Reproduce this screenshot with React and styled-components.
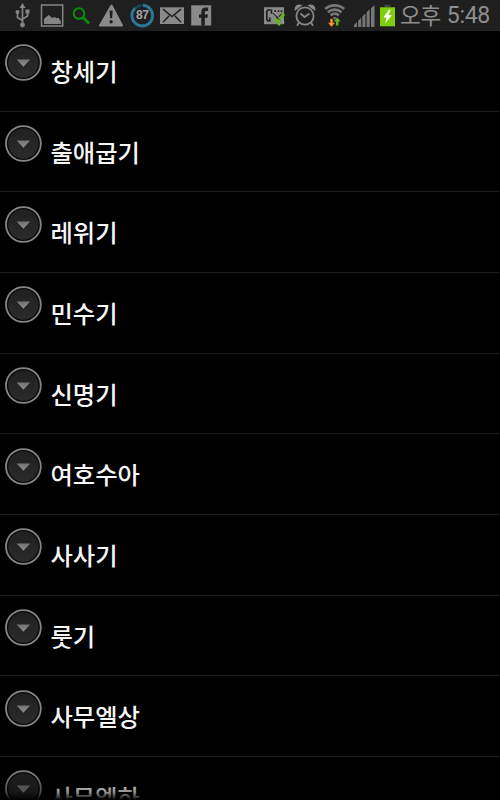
import React from 'react';
import styled, { createGlobalStyle } from 'styled-components';

const GlobalStyle = createGlobalStyle`
  html, body { margin: 0; background: #000; }
  *, *::before, *::after { box-sizing: border-box; }
`;

const Screen = styled.main`
  position: relative;
  display: flex;
  flex-direction: column;
  width: 500px;
  height: 800px;
  overflow: hidden;
  background: #000;
  font-family: Roboto, 'Noto Sans CJK KR', sans-serif;
`;

const StatusBar = styled.header`
  display: flex;
  flex: none;
  justify-content: space-between;
  height: 31px;
  padding: 0 10px 0 12px;
  background: #1f1f1f;
`;

const IconGroup = styled.div`
  display: flex;
  align-items: flex-start;
  gap: ${({ $gap }) => $gap}px;
`;

const StatusIcon = styled.svg`
  display: block;
  flex: none;
  width: ${({ $width }) => $width}px;
  height: 31px;
  overflow: visible;
`;

const Clock = styled.time`
  display: flex;
  justify-content: space-between;
  width: 90px;
  height: 30px;
  color: #8f8f8f;
  font-size: 23px;
  line-height: 31px;
  letter-spacing: -0.3px;
  white-space: nowrap;
`;

const Meridiem = styled.span`
  font-family: 'Noto Sans CJK KR', sans-serif;
  font-size: 22.5px;
  font-weight: 400;
  line-height: 28px;
`;

const BookList = styled.ul`
  flex: 1;
  min-height: 0;
  margin: 0;
  padding: 0;
  overflow: hidden;
  list-style: none;
`;

const BookRow = styled.li`
  display: flex;
  align-items: flex-start;
  height: 80.67px;
  padding-left: 5px;
  border-bottom: 1px solid #1c1c1c;
`;

const Expander = styled.svg`
  flex: none;
  width: 37px;
  height: 37px;
  margin-top: 13.4px;
`;

const BookName = styled.span`
  margin: 22px 0 0 8.5px;
  color: #f7f7f7;
  font-family: 'Noto Sans CJK KR', sans-serif;
  font-size: 24.3px;
  font-weight: 500;
  line-height: 36px;
`;

const BottomFade = styled.div`
  position: absolute;
  right: 0;
  bottom: 0;
  left: 0;
  height: 32px;
  background: linear-gradient(rgba(0, 0, 0, 0), rgba(0, 0, 0, 0.4) 75%, #000);
  pointer-events: none;
`;

const books = ['창세기', '출애굽기', '레위기', '민수기', '신명기', '여호수아', '사사기', '룻기', '사무엘상', '사무엘하'];

const Usb = () => (
  <StatusIcon $width={20} viewBox="0 0 20 31" fill="none" stroke="#858585" strokeWidth="1.7">
    <path d="M10.5 7v17M10.5 20.5l-5-3V13M10.5 19l5-3v-4" />
    <path d="M10.5 3l3 5h-6z" fill="#858585" stroke="none" />
    <circle cx="10.5" cy="25" r="2.4" fill="#858585" stroke="none" />
    <circle cx="5.5" cy="12" r="2" fill="#858585" stroke="none" />
    <path d="M13.5 9.5h4v4h-4z" fill="#858585" stroke="none" />
  </StatusIcon>
);

const Picture = () => (
  <StatusIcon $width={24} viewBox="0 0 24 31">
    <path d="M2.5 4.9h21.2v21.2H2.5z" fill="none" stroke="#858585" strokeWidth="1.5" />
    <path d="M5 24v-5l4.5-4 4 3 2-1 2 1.3 2-.6 2.3 3.3v3z" fill="#858585" />
  </StatusIcon>
);

const Search = () => (
  <StatusIcon $width={21} viewBox="0 0 21 31" fill="none" stroke="#078c0d">
    <circle cx="9" cy="13.5" r="5.3" strokeWidth="2" />
    <path d="M13 17.5l6 6" strokeWidth="2.8" />
  </StatusIcon>
);

const Warning = () => (
  <StatusIcon $width={25} viewBox="0 0 25 31">
    <path d="M13.5 5.5L24 25.5H2z" fill="#8b8b8b" stroke="#8b8b8b" strokeWidth="2" strokeLinejoin="round" />
    <path d="M11.5 10.5h3.2l-.6 7.8h-2z" fill="#1f1f1f" />
    <circle cx="13.1" cy="21.7" r="1.7" fill="#1f1f1f" />
  </StatusIcon>
);

const Level = styled.text`
  fill: #a4a4a4;
  font: 700 12px 'Liberation Sans', sans-serif;
  letter-spacing: -0.4px;
`;

const BatteryRing = () => (
  <StatusIcon $width={24} viewBox="0 0 24 31">
    <circle cx="12.3" cy="15.6" r="10.3" fill="none" stroke="#184353" strokeWidth="2.8" />
    <path d="M12.3 5.3A10.3 10.3 0 1 1 5 8.3" fill="none" stroke="#2a7695" strokeWidth="3" />
    <path d="M12.3 3v5" stroke="#1f1f1f" strokeWidth="1" />
    <Level x="12.2" y="19.4" textAnchor="middle">87</Level>
  </StatusIcon>
);

const Mail = () => (
  <StatusIcon $width={24} viewBox="0 0 24 31">
    <path d="M0 7.3h24V24H0z" fill="#8a8a8a" />
    <path d="M3 9.2l9 7.3 9-7.3M3 22.3l6.2-6.5M21 22.3l-6.2-6.5" fill="none" stroke="#1f1f1f" strokeWidth="1.5" />
  </StatusIcon>
);

const Facebook = () => (
  <StatusIcon $width={21} viewBox="0 0 21 31">
    <path d="M.2 5.3h20v20.2H.2z" fill="#8a8a8a" />
    <path d="M10.3 25.5v-7.7H8v-3.4h2.3V12c0-3 1.8-4.4 4.3-4.4h2.5v3.3h-1.8c-1 0-1.5.5-1.5 1.4v2.1h3.1l-.4 3.4h-2.7v7.7z" fill="#1f1f1f" />
  </StatusIcon>
);

const KeyImage = () => (
  <StatusIcon $width={22} viewBox="0 0 22 31">
    <path d="M0 7.2h20v17H0z" fill="#898989" />
    <path d="M6.5 10H4L2.8 11.3v8.2L4 20.8h1.8v-3.3M7.5 9.5v4.3M11.2 10.3v1.8M14.5 10.3v1.8M17.5 10.3v1.8" fill="none" stroke="#1f1f1f" strokeWidth="1.7" />
    <path d="M9.3 13.2l7 7.3M18.5 13.5l-6 5" fill="none" stroke="#1f1f1f" strokeWidth="1.2" />
    <path d="M8.5 11l12 12" stroke="#a0a0a0" />
    <path d="M19 14.5v3.7h-3M15 24v-3.5h-3" fill="none" stroke="#65b51e" strokeWidth="1.8" />
    <path d="M16.4 15.5l2.6-3 2.6 3zM12.4 23l2.6 3.3 2.6-3.3zM12.5 17.8l-2.9 2.7 2.9 2.7zM16.8 15.8l-2.5 2.4 2.5 2.4z" fill="#65b51e" />
  </StatusIcon>
);

const Alarm = () => (
  <StatusIcon $width={22} viewBox="0 0 22 31" fill="none" stroke="#888" strokeWidth="1.8">
    <circle cx="11" cy="16" r="8.6" />
    <path d="M6.5 13.5l4 3.5 5-3.5" />
    <path d="M1.5 9.3c0-3 2.4-4.7 5.2-3.7zM20.5 9.3c0-3-2.4-4.7-5.2-3.7zM5 22.5L3 25.7M17 22.5l2 3.2" />
  </StatusIcon>
);

const Wifi = () => (
  <StatusIcon $width={22} viewBox="0 0 22 31" fill="none">
    <g stroke="#777" strokeWidth="2.7">
      <path d="M1.2 9c5.5-4.8 13.5-4.8 19 0M3.9 12.2c4-3.5 9.6-3.5 13.6 0M6.6 15.4c2.5-2.1 5.7-2.1 8.2 0" />
      <path d="M8.7 17.7c1.2-1 2.8-1 4 0l-2 2z" fill="#777" stroke="none" />
    </g>
    <path d="M6.3 18.7h2.4v4h2.3l-3.5 4-3.5-4h2.3z" fill="#f6922b" />
    <path d="M12 25.5h2.4v-4h2.3l-3.5-4-3.5 4H12z" fill="#65b51e" />
  </StatusIcon>
);

const Signal = () => (
  <StatusIcon $width={21} viewBox="0 0 21 31" fill="#777">
    <path d="M0 27v-2l3-3v5zM4.2 27v-6.2l3-3V27zM8.4 27V16.5l3-3V27zM12.6 27V12.3l3.1-3V27zM17 27V8.2l3.5-3V27z" />
  </StatusIcon>
);

const BatteryIcon = styled(StatusIcon)`
  margin-left: -3px;
`;

const Battery = () => (
  <BatteryIcon $width={15} viewBox="0 0 15 31">
    <path d="M4.5 4.5h6v3h-6z" fill="#454545" />
    <path d="M0 7.3h15v19H0z" fill="#7fce0b" />
    <path d="M8.9 9.8l-5.5 7.6h3l-1.2 5.9 6.7-8.1H8.6l2.1-5.4z" fill="#fff" />
  </BatteryIcon>
);

const ExpandArrow = () => (
  <Expander viewBox="0 0 37 37">
    <defs>
      <linearGradient id="disc" x1="0" y1="0" x2="0" y2="1">
        <stop offset="0" stopColor="#202020" />
        <stop offset="1" stopColor="#2b2b2b" />
      </linearGradient>
      <linearGradient id="arrow" x1="0" y1="0" x2="0" y2="1">
        <stop offset="0" stopColor="#747474" />
        <stop offset="1" stopColor="#8d8d8d" />
      </linearGradient>
    </defs>
    <circle cx="18.4" cy="18.5" r="17.4" fill="#080808" stroke="#858585" strokeWidth="1.8" />
    <circle cx="18.4" cy="18.5" r="15.2" fill="url(#disc)" />
    <path d="M11.6 15.5h13.6l-6.8 7.3z" fill="url(#arrow)" />
  </Expander>
);

export default function App() {
  return (
    <>
      <GlobalStyle />
      <Screen>
        <StatusBar>
          <IconGroup $gap={6.9}>
            <Usb />
            <Picture />
            <Search />
            <Warning />
            <BatteryRing />
            <Mail />
            <Facebook />
          </IconGroup>
          <IconGroup $gap={8}>
            <IconGroup $gap={8}>
              <KeyImage />
              <Alarm />
              <Wifi />
              <Signal />
            </IconGroup>
            <IconGroup $gap={5}>
              <Battery />
              <Clock>
                <Meridiem>오후</Meridiem>
                <span>5:48</span>
              </Clock>
            </IconGroup>
          </IconGroup>
        </StatusBar>
        <BookList>
          {books.map((name) => (
            <BookRow key={name}>
              <ExpandArrow />
              <BookName>{name}</BookName>
            </BookRow>
          ))}
        </BookList>
        <BottomFade />
      </Screen>
    </>
  );
}
